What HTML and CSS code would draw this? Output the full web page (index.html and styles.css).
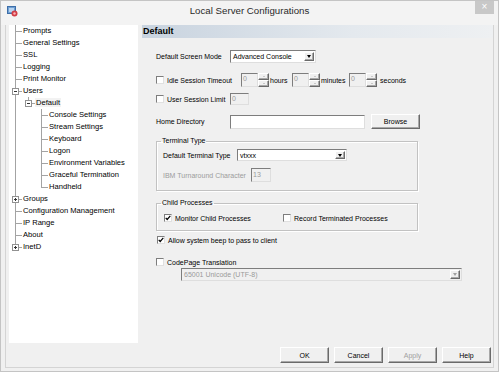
FILE: index.html
```html
<!DOCTYPE html>
<html lang="en">
<head>
    <meta charset="UTF-8">
    <title>Local Server Configurations</title>
    <link rel="stylesheet" href="styles.css">
</head>
<body>
<div class="window">
    <div class="titlebar">
        <svg class="app-icon" width="11" height="11" viewBox="0 0 11 11">
            <rect x="0.5" y="0.5" width="8" height="7" fill="#6f9fd3" stroke="#3d6ea8"/>
            <rect x="2" y="2" width="5" height="4" fill="#b9d4ef"/>
            <circle cx="7.5" cy="7.5" r="3" fill="#d23c45"/>
            <circle cx="7.5" cy="7.5" r="1.2" fill="#f6b3b6"/>
        </svg>
        <span class="title">Local Server Configurations</span>
        <span class="close">&#215;</span>
    </div>

    <div class="frame">
        <div class="client">
            <div class="tree-box">
                <ul class="tree">
                    <li>Prompts</li>
                    <li>General Settings</li>
                    <li>SSL</li>
                    <li>Logging</li>
                    <li>Print Monitor</li>
                    <li><i class="toggle minus"></i>Users
                        <ul>
                            <li><i class="toggle minus"></i><span class="current">Default</span>
                                <ul>
                                    <li>Console Settings</li>
                                    <li>Stream Settings</li>
                                    <li>Keyboard</li>
                                    <li>Logon</li>
                                    <li>Environment Variables</li>
                                    <li>Graceful Termination</li>
                                    <li>Handheld</li>
                                </ul>
                            </li>
                        </ul>
                    </li>
                    <li><i class="toggle plus"></i>Groups</li>
                    <li>Configuration Management</li>
                    <li>IP Range</li>
                    <li>About</li>
                    <li><i class="toggle plus"></i>InetD</li>
                </ul>
            </div>

            <div class="panel">
                <div class="panel-head">Default</div>
                <div class="panel-body">
                    <div class="row mode-row">
                        <span class="label w74">Default Screen Mode</span>
                        <div class="select field mode-select"><span class="value">Advanced Console</span><span class="drop raised"></span></div>
                    </div>

                    <div class="row idle-row">
                        <span class="check"></span>
                        <span class="label w74">Idle Session Timeout</span>
                        <div class="spin"><span class="spin-box field off">0</span><span class="spin-btns"><i class="raised up"></i><i class="raised down"></i></span></div>
                        <span class="unit hours">hours</span>
                        <div class="spin"><span class="spin-box field off">0</span><span class="spin-btns"><i class="raised up"></i><i class="raised down"></i></span></div>
                        <span class="unit minutes">minutes</span>
                        <div class="spin"><span class="spin-box field off">0</span><span class="spin-btns"><i class="raised up"></i><i class="raised down"></i></span></div>
                        <span class="unit seconds">seconds</span>
                    </div>

                    <div class="row limit-row">
                        <span class="check"></span>
                        <span class="label w63">User Session Limit</span>
                        <span class="field off small-input">0</span>
                    </div>

                    <div class="row home-row">
                        <span class="label w74">Home Directory</span>
                        <span class="field home-input"></span>
                        <span class="button raised browse">Browse</span>
                    </div>

                    <fieldset class="group terminal">
                        <legend>Terminal Type</legend>
                        <div class="row term-row">
                            <span class="label w74">Default Terminal Type</span>
                            <div class="select field term-select"><span class="value">vtxxx</span><span class="drop raised"></span></div>
                        </div>
                        <div class="row ibm-row">
                            <span class="label w88 dim">IBM Turnaround Character</span>
                            <span class="field off ibm-input">13</span>
                        </div>
                    </fieldset>

                    <fieldset class="group child">
                        <legend>Child Processes</legend>
                        <div class="row child-row">
                            <span class="check on"><svg width="6" height="6" viewBox="0 0 6 6"><polyline points="0.7,2.8 2.2,4.5 5.3,0.9" fill="none" stroke="#000" stroke-width="1.2"/></svg></span>
                            <span class="label w108">Monitor Child Processes</span>
                            <span class="check"></span>
                            <span class="label">Record Terminated Processes</span>
                        </div>
                    </fieldset>

                    <div class="row beep-row">
                        <span class="check on"><svg width="6" height="6" viewBox="0 0 6 6"><polyline points="0.7,2.8 2.2,4.5 5.3,0.9" fill="none" stroke="#000" stroke-width="1.2"/></svg></span>
                        <span class="label">Allow system beep to pass to client</span>
                    </div>

                    <div class="row codepage-row">
                        <span class="check"></span>
                        <span class="label">CodePage Translation</span>
                    </div>
                    <div class="select field off codepage-select"><span class="value">65001 Unicode (UTF-8)</span><span class="drop raised off"></span></div>
                </div>
            </div>
        </div>

        <div class="buttons">
            <span class="button raised">OK</span>
            <span class="button raised">Cancel</span>
            <span class="button raised disabled">Apply</span>
            <span class="button raised">Help</span>
        </div>
    </div>
</div>
</body>
</html>
```

FILE: styles.css
```css
body {
    margin: 0;
    background: #f0f0f0;
    font-family: 'Liberation Sans', Arial, sans-serif;
    color: #000000;
}
.window {
    width: 499px;
    height: 372px;
    box-sizing: border-box;
    border: 1px solid #c4c4c4;
    background: #f0f0f0;
    display: flex;
    flex-direction: column;
}
.titlebar {
    height: 24px;
    flex: none;
    display: grid;
    grid-template-columns: 1fr auto 1fr;
    align-items: start;
    background: #f3f3f3;
}
.app-icon {
    margin: 5px 0 0 6px;
}
.title {
    font-size: 9.7px;
    line-height: 12px;
    margin-top: 4px;
    color: #2a2a2a;
}
.close {
    justify-self: end;
    width: 19px;
    height: 13px;
    margin-right: 4px;
    background: #c8c8c8;
    color: #ffffff;
    font-size: 10px;
    line-height: 12px;
    text-align: center;
}
.frame {
    flex: 1;
    margin: 0 4px 3px 4px;
    border: 1px solid #d4d4d4;
    border-top: none;
    display: flex;
    flex-direction: column;
}
.client {
    height: 320px;
    display: flex;
}

/* tree */
.tree-box {
    width: 129px;
    height: 318px;
    margin-left: 3px;
    background: #ffffff;
    flex: none;
}
.tree, .tree ul {
    list-style: none;
    margin: 0;
}
.tree {
    padding: 0 0 0 6px;
    font-size: 7.6px;
    line-height: 12px;
}
.tree ul {
    padding: 0 0 0 5px;
}
.tree li {
    position: relative;
    padding-left: 8px;
    white-space: nowrap;
}
.tree li::before {
    content: "";
    position: absolute;
    left: 0;
    top: 0;
    width: 6px;
    height: 6px;
    border-left: 1px solid #a3a3a3;
    border-bottom: 1px solid #a3a3a3;
}
.tree li::after {
    content: "";
    position: absolute;
    left: 0;
    top: 6px;
    bottom: 0;
    border-left: 1px solid #a3a3a3;
}
.tree li:last-child::after {
    display: none;
}
.toggle {
    position: absolute;
    z-index: 1;
    left: -3px;
    top: 3px;
    width: 7px;
    height: 7px;
    box-sizing: border-box;
    border: 1px solid #919191;
    background: #ffffff;
}
.toggle::before {
    content: "";
    position: absolute;
    left: 1px;
    top: 2px;
    width: 3px;
    height: 1px;
    background: #333333;
}
.toggle.plus::after {
    content: "";
    position: absolute;
    left: 2px;
    top: 1px;
    width: 1px;
    height: 3px;
    background: #333333;
}
.current {
    background: #f2f2f2;
    padding: 0 1px;
    margin-left: -1px;
}

/* right panel */
.panel {
    flex: 1;
    margin-left: 4px;
    display: flex;
    flex-direction: column;
}
.panel-head {
    height: 13px;
    line-height: 13px;
    padding-left: 1px;
    font-size: 9px;
    font-weight: bold;
    background: linear-gradient(to right, #c8d3df, #e4e9ee 60%, #eef0f2);
}
.panel-body {
    padding-left: 14px;
    display: flex;
    flex-direction: column;
    align-items: flex-start;
    font-size: 7px;
}
.row {
    display: flex;
    align-items: center;
    white-space: nowrap;
}
.label {
    flex: none;
}
.w63 { width: 63px; }
.w74 { width: 74px; }
.w88 { width: 88px; }
.w108 { width: 108px; }
.dim { color: #9c9c9c; }

.field {
    box-sizing: border-box;
    background: #ffffff;
    border: 1px solid;
    border-color: #7d7d7d #dedede #dedede #7d7d7d;
}
.field.off {
    background: #f0f0f0;
    color: #9a9a9a;
}
.raised {
    box-sizing: border-box;
    background: #f0f0f0;
    border: 1px solid;
    border-color: #ffffff #6a6a6a #6a6a6a #ffffff;
    box-shadow: inset -1px -1px 0 #a8a8a8;
}
.check {
    width: 8px;
    height: 8px;
    box-sizing: border-box;
    margin-right: 3px;
    background: #ffffff;
    border: 1px solid;
    border-color: #7d7d7d #e0e0e0 #e0e0e0 #7d7d7d;
    display: flex;
    align-items: center;
    justify-content: center;
    flex: none;
}

.select {
    display: flex;
    align-items: stretch;
    padding: 1px;
}
.select .value {
    flex: 1;
    padding-left: 1px;
    line-height: 9px;
}
.drop {
    width: 10px;
    display: flex;
    align-items: center;
    justify-content: center;
}
.drop::after {
    content: "";
    border-left: 2.5px solid transparent;
    border-right: 2.5px solid transparent;
    border-top: 3px solid #000000;
}
.drop.off::after {
    border-top-color: #a0a0a0;
}

.mode-row { margin-top: 12px; height: 13px; }
.mode-select { width: 86px; height: 13px; }

.idle-row { margin-top: 10px; height: 14px; }
.spin {
    display: flex;
    width: 28px;
    height: 14px;
}
.spin-box {
    width: 17px;
    padding-left: 1px;
    line-height: 10px;
}
.spin-btns {
    width: 11px;
    display: flex;
    flex-direction: column;
}
.spin-btns i {
    height: 7px;
    display: flex;
    align-items: center;
    justify-content: center;
}
.spin-btns .up::after {
    content: "";
    border-left: 1.5px solid transparent;
    border-right: 1.5px solid transparent;
    border-bottom: 1.5px solid #a0a0a0;
}
.spin-btns .down::after {
    content: "";
    border-left: 1.5px solid transparent;
    border-right: 1.5px solid transparent;
    border-top: 1.5px solid #a0a0a0;
}
.unit { padding-left: 1px; }
.hours { width: 22px; }
.minutes { width: 28px; }
.seconds { padding-left: 3px; }

.limit-row { margin-top: 6px; height: 12px; }
.small-input {
    width: 19px;
    height: 12px;
    line-height: 10px;
    padding-left: 1px;
}

.home-row { margin-top: 9px; height: 15px; }
.home-input { width: 135px; height: 14px; }
.button {
    display: flex;
    align-items: center;
    justify-content: center;
    width: 49px;
    font-size: 7px;
}
.browse {
    height: 15px;
    margin-left: 6px;
}

.group {
    margin: 8px 0 0 0;
    padding: 0 0 0 6px;
    width: 262px;
    box-sizing: border-box;
    border: 1px solid #c2c2c2;
    box-shadow: 1px 1px 0 #ffffff, inset 1px 1px 0 #ffffff;
    min-width: 0;
}
.group legend {
    padding: 0 1px;
    margin-left: -2px;
    font-size: 7px;
    line-height: 8px;
}
.terminal { padding-bottom: 8px; }
.term-row { margin-top: 4px; height: 12px; }
.term-select { width: 110px; height: 12px; }
.ibm-row { margin-top: 7px; height: 14px; }
.ibm-input {
    width: 20px;
    height: 14px;
    line-height: 11px;
    padding-left: 1px;
}
.child { padding-bottom: 6px; }
.child-row { margin-top: 5px; height: 12px; padding-left: 1px; }

.beep-row { margin-top: 4px; height: 10px; padding-left: 1px; }
.codepage-row { margin-top: 12px; height: 10px; }
.codepage-select {
    margin: 1px 0 0 25px;
    width: 281px;
    height: 13px;
}

.buttons {
    display: flex;
    justify-content: flex-end;
    gap: 5px;
    padding: 2px 2px 0 0;
}
.buttons .button {
    height: 16px;
}
.button.disabled {
    color: #a0a0a0;
}
```
